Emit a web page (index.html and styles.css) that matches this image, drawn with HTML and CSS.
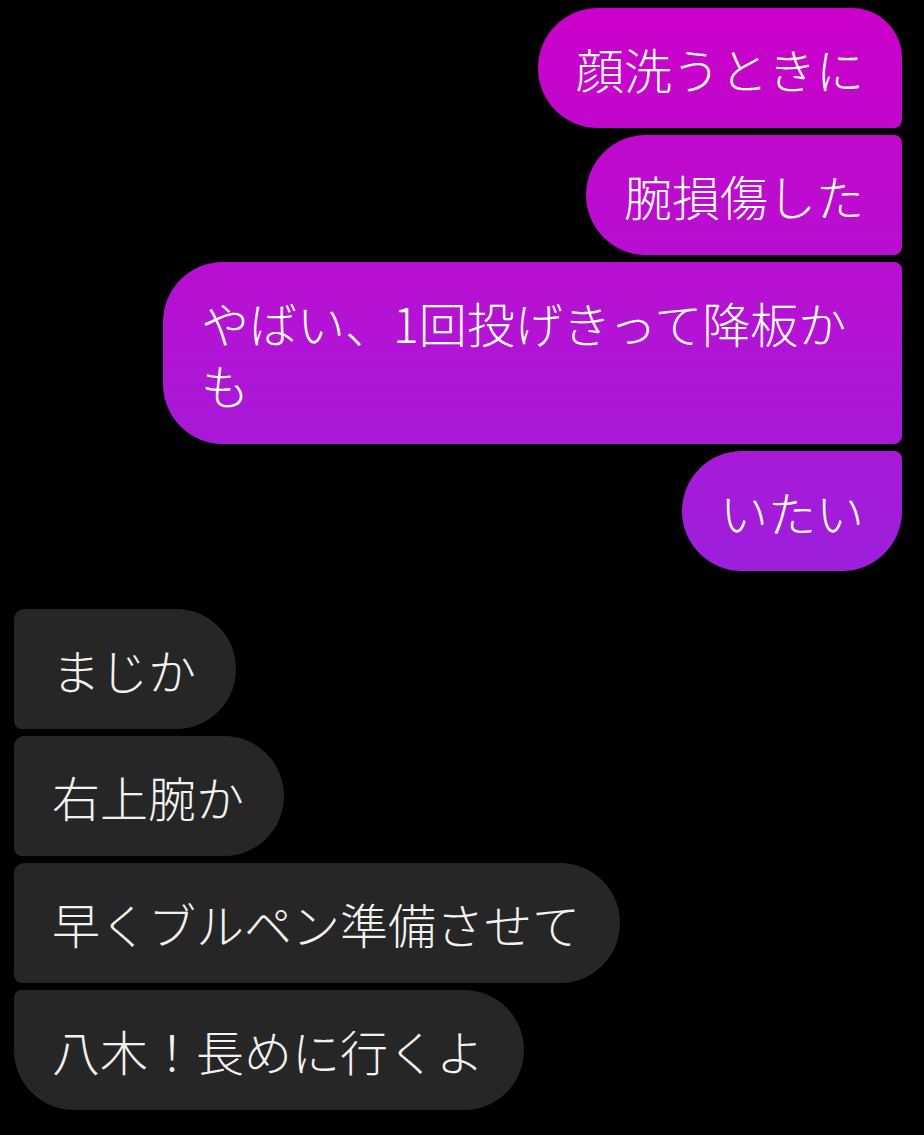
FILE: index.html
```html
<!DOCTYPE html>
<html lang="ja">
<head>
  <meta charset="UTF-8" />
  <meta name="viewport" content="width=device-width, initial-scale=1.0"/>
  <title>Chat</title>
  <link rel="stylesheet" href="styles.css">
</head>
<body>

  <div class="thread">
    <div class="group sent">
      <div class="bubble first">顔洗うときに</div>
      <div class="bubble">腕損傷した</div>
      <div class="bubble">やばい、1回投げきって降板かも</div>
      <div class="bubble last">いたい</div>
    </div>

    <div class="group received">
      <div class="bubble">まじか</div>
      <div class="bubble">右上腕か</div>
      <div class="bubble">早くブルペン準備させて</div>
      <div class="bubble last">八木！長めに行くよ</div>
    </div>
  </div>

</body>
</html>
```

FILE: styles.css
```css
* {
  margin: 0;
  box-sizing: border-box;
}

body {
  background: #000;
  color: #fff;
  font-family: "Noto Sans CJK JP", "Noto Sans", sans-serif;
  font-weight: 300;
  height: 100vh;
  overflow: hidden;
}

.thread {
  display: flex;
  flex-direction: column;
  gap: 38px;
  padding: 8px 22px 0 14px;
}

.group {
  display: flex;
  flex-direction: column;
  gap: 7px;
}

.bubble {
  max-width: 739px;
  padding: 29px 38px;
  font-size: 48px;
  line-height: 62px;
}

/* sent: right side, gradient tied to the viewport */
.sent {
  align-items: flex-end;
}

.sent .bubble {
  background: linear-gradient(180deg, #cb00c9 0px, #b313d4 330px, #9b20dc 580px) fixed;
  border-radius: 60px 8px 8px 60px;
}

.sent .bubble.first {
  border-radius: 60px 50px 8px 60px;
}

.sent .bubble.last {
  border-radius: 60px 8px 60px 60px;
}

/* received: left side, grey */
.received {
  align-items: flex-start;
}

.received .bubble {
  background: #262626;
  color: #f2f2f2;
  border-radius: 10px 60px 60px 8px;
  padding-right: 40px;
}

.received .bubble.last {
  border-radius: 8px 60px 60px 60px;
}
```
